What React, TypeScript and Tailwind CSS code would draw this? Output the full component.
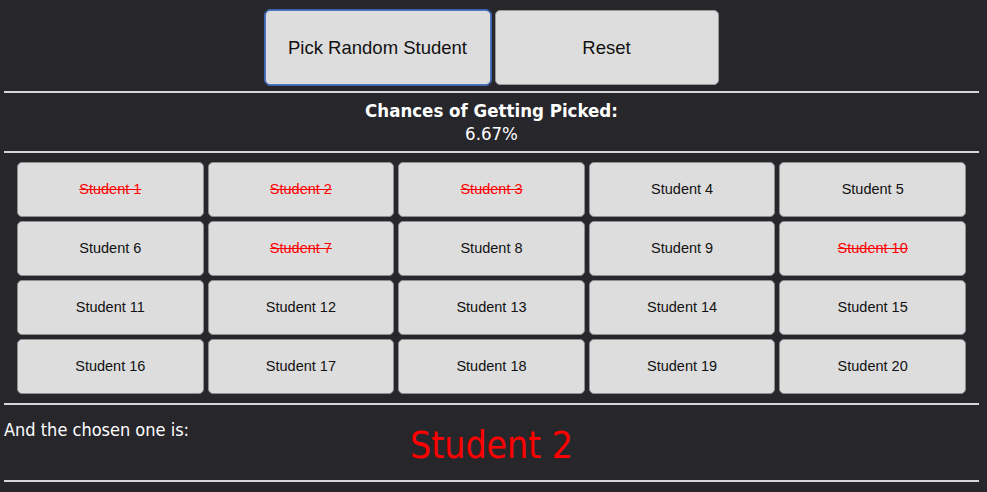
const students = Array.from({ length: 20 }, (_, i) => `Student ${i + 1}`);
const picked = [1, 2, 3, 7, 10];

export default function App() {
    return (
        <div className="min-h-[492px] bg-[#27262b] pl-[4px] pr-[8px] pt-[10px]">
            <div className="flex justify-center gap-[4px]">
                <button className="w-[226px] h-[75px] bg-[#dddddd] border border-[#4f77c4] rounded-[5px] text-[18.5px] text-[#111] font-['Liberation_Sans',sans-serif] outline outline-1 outline-[#3d63ad]">
                    Pick Random Student
                </button>
                <button className="w-[224px] h-[75px] bg-[#dddddd] border border-[#9a9a9a] rounded-[5px] text-[18.5px] text-[#111] font-['Liberation_Sans',sans-serif]">
                    Reset
                </button>
            </div>

            <div className="mt-[6px] h-[2px] bg-[#d6d6d6]" />

            <div className="text-center text-white text-[18.5px] leading-[23px] font-['DejaVu_Sans_Condensed','DejaVu_Sans',sans-serif] pt-[6px] pb-[6px]">
                <div className="font-bold">Chances of Getting Picked:</div>
                <div>6.67%</div>
            </div>

            <div className="h-[2px] bg-[#d6d6d6]" />

            <div className="px-[13px] pt-[9px] pb-[9px] grid grid-cols-5 gap-[4px]">
                {students.map((s, i) => (
                    <button
                        key={s}
                        className={`h-[55px] bg-[#dddddd] border border-[#8f8f8f] rounded-[5px] text-[14.5px] font-['Liberation_Sans',sans-serif] ${picked.includes(i + 1) ? 'text-[#ff0000] line-through' : 'text-[#111]'}`}
                    >
                        {s}
                    </button>
                ))}
            </div>

            <div className="h-[2px] bg-[#d6d6d6]" />

            <div className="grid grid-cols-[1fr_auto_1fr] h-[75px] font-['DejaVu_Sans_Condensed','DejaVu_Sans',sans-serif]">
                <div className="text-white text-[18px] pt-[11px]">And the chosen one is:</div>
                <div className="text-[#ff0000] text-[37px] pt-[16px] leading-[50px]">Student 2</div>
                <div />
            </div>

            <div className="h-[2px] bg-[#d6d6d6]" />
        </div>
    );
}
